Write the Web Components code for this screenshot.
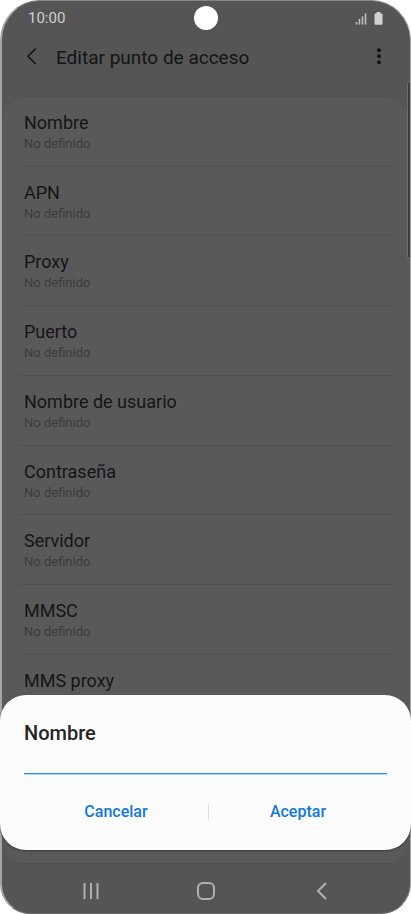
<!DOCTYPE html>
<html lang="es">
<head>
<meta charset="utf-8">
<meta name="viewport" content="width=device-width, initial-scale=1">
<title>Editar punto de acceso</title>
<style>
  html { height: 100%; background: #fff; }
  body { margin: 0; min-height: 100%; display: flex; font-family: Roboto, "Liberation Sans", sans-serif; }
</style>
</head>
<body>
<phone-screen>
  <status-bar slot="top" time="10:00"></status-bar>
  <app-header slot="top">Editar punto de acceso</app-header>
  <settings-list>
    <setting-row value="No definido">Nombre</setting-row>
    <setting-row value="No definido">APN</setting-row>
    <setting-row value="No definido">Proxy</setting-row>
    <setting-row value="No definido">Puerto</setting-row>
    <setting-row value="No definido">Nombre de usuario</setting-row>
    <setting-row value="No definido">Contraseña</setting-row>
    <setting-row value="No definido">Servidor</setting-row>
    <setting-row value="No definido">MMSC</setting-row>
    <setting-row value="No definido">MMS proxy</setting-row>
    <setting-row></setting-row>
    <setting-row></setting-row>
  </settings-list>
  <nav-bar slot="bottom"></nav-bar>
  <text-dialog slot="dialog" heading="Nombre">
    <dialog-action slot="cancel">Cancelar</dialog-action>
    <dialog-action slot="accept">Aceptar</dialog-action>
  </text-dialog>
</phone-screen>
<script>
  const define = (name, html, setup) => {
    const template = document.createElement('template');
    template.innerHTML = html;
    customElements.define(name, class extends HTMLElement {
      constructor() {
        super();
        this.attachShadow({ mode: 'open' }).append(template.content.cloneNode(true));
      }
      connectedCallback() { if (setup) setup(this, this.shadowRoot); }
    });
  };

  define('phone-screen', `
    <style>
      :host { flex: 1; min-width: 0; position: relative; display: flex; }
      .shell { flex: 1; min-width: 0; display: flex; flex-direction: column; box-sizing: border-box;
        background: #555; border: 1px solid #858585; border-left: 2px solid #a5a5a5; border-right-color: #a0a0a0;
        border-bottom-color: #6c6c6c; border-radius: 40px 40px 30px 30px; overflow: hidden; }
      main { flex: 1; display: flex; }
      .thumb { position: absolute; right: 1px; top: 81px; width: 2px; height: 176px; background: #3c3c3c;
        border: 1px solid #6c6c6c; border-right: 0; border-radius: 3px 0 0 3px; box-sizing: content-box; }
    </style>
    <div class="shell">
      <slot name="top"></slot>
      <main><slot></slot></main>
      <slot name="bottom"></slot>
    </div>
    <div class="thumb"></div>
    <slot name="dialog"></slot>
  `);

  define('status-bar', `
    <style>
      :host { display: grid; grid-template-columns: 1fr 24px 1fr; align-items: center; height: 34px; padding: 0 27px 0 26px; color: #d0d0d0; }
      .time { font-size: 15px; line-height: 18px; }
      .camera { width: 24px; height: 24px; border-radius: 50%; background: #fff; }
      .icons { display: flex; justify-content: flex-end; gap: 7px; }
      svg { display: block; }
    </style>
    <span class="time"></span>
    <span class="camera"></span>
    <span class="icons">
      <svg width="12" height="13" viewBox="0 0 12 13" fill="none" stroke="#c0c0c0" stroke-width="1.6"><path d="M1.500 10v2.500M4.500 7v5.500M7.500 4.500v8M10.500 1.500v11"/></svg>
      <svg width="9" height="13" viewBox="0 0 9 13" fill="#d2d2d2"><path d="M2.500 0h4v1.400h1q1 0 1 1v9.300q0 1-1 1h-6q-1 0-1-1V2.400q0-1 1-1h1z"/></svg>
    </span>
  `, (host, root) => { root.querySelector('.time').textContent = host.getAttribute('time'); });

  define('app-header', `
    <style>
      :host { display: flex; align-items: center; height: 46px; padding: 0 15px 15px 14px; color: #141414; }
      h1 { flex: 1; margin: 0 0 0 8px; font-size: 19px; line-height: 24px; font-weight: 400; }
      button { width: 32px; height: 32px; padding: 0; border: 0; background: none; color: inherit; display: grid; place-items: center; }
    </style>
    <button aria-label="Atrás"><svg width="32" height="32" viewBox="0 0 32 32" fill="none" stroke="currentColor" stroke-width="1.6"><path d="M19.700 6.600 12 14.300l7.700 7.700"/></svg></button>
    <h1><slot></slot></h1>
    <button aria-label="Más opciones"><svg width="32" height="32" viewBox="0 0 32 32" fill="currentColor"><circle cx="16" cy="8.200" r="2"/><circle cx="16" cy="14.200" r="2"/><circle cx="16" cy="20.300" r="2"/></svg></button>
  `);

  define('settings-list', `
    <style>
      :host { flex: 1; display: grid; grid-auto-rows: 1fr; background: #595959; border-radius: 26px; border-top: 1px solid #525252; }
    </style>
    <slot></slot>
  `);

  define('setting-row', `
    <style>
      :host { display: flex; flex-direction: column; min-height: 64px; box-sizing: border-box;
        margin: 0 18px; padding: 14px 4px 0; border-bottom: 1px solid #505050; }
      .name { font-size: 18px; line-height: 24px; color: #151515; }
      .value { font-size: 13px; line-height: 17px; color: #3c3c3c; }
    </style>
    <span class="name"><slot></slot></span>
    <span class="value"></span>
  `, (host, root) => { root.querySelector('.value').textContent = host.getAttribute('value') || ''; });

  define('nav-bar', `
    <style>
      :host { display: block; padding: 5px 30px 0; }
      nav { display: grid; grid-template-columns: repeat(3, 1fr); height: 44px; }
      button { padding: 0; border: 0; background: none; color: #b0b0b0; display: grid; place-items: center; }
    </style>
    <nav>
      <button aria-label="Recientes"><svg width="24" height="24" viewBox="0 0 24 24" fill="none" stroke="currentColor" stroke-width="2"><path d="M6.500 4v16M13 4v16M19.500 4v16"/></svg></button>
      <button aria-label="Inicio"><svg width="24" height="24" viewBox="0 0 24 24" fill="none" stroke="currentColor" stroke-width="2"><rect x="4" y="4" width="16" height="16" rx="5"/></svg></button>
      <button aria-label="Volver"><svg width="24" height="24" viewBox="0 0 24 24" fill="none" stroke="currentColor" stroke-width="2"><path d="M16 4 8 12l8 8"/></svg></button>
    </nav>
  `);

  define('text-dialog', `
    <style>
      :host { position: absolute; left: 0; right: 0; bottom: 64px; }
      form { background: #fcfcfc; border-radius: 26px; padding: 26px 24px 18px; box-shadow: 0 1px 2px #3c3c3c; }
      label { display: block; font-size: 20px; line-height: 24px; font-weight: 500; color: #252525; }
      input { display: block; box-sizing: border-box; width: 100%; height: 29px; padding: 0; border: 0; border-bottom: 1px solid #2a8af0;
        box-shadow: 0 1px #b4d6f8; border-radius: 0; background: none; outline: 0; font: inherit; font-size: 18px; color: #252525; }
      .actions { display: grid; grid-template-columns: 31fr 1px 30fr; align-items: center; padding-top: 18px; }
      .line { height: 16px; background: #e0e0e0; }
    </style>
    <form role="dialog" aria-labelledby="heading">
      <label for="field" id="heading"></label>
      <input id="field" type="text">
      <div class="actions"><slot name="cancel"></slot><span class="line"></span><slot name="accept"></slot></div>
    </form>
  `, (host, root) => { root.querySelector('label').textContent = host.getAttribute('heading'); });

  define('dialog-action', `
    <style>
      :host { display: flex; }
      button { flex: 1; height: 40px; padding: 0; border: 0; background: none; font: inherit; font-size: 16px; line-height: 20px; font-weight: 500; color: #0f78e0; }
    </style>
    <button type="button"><slot></slot></button>
  `);
</script>
</body>
</html>
